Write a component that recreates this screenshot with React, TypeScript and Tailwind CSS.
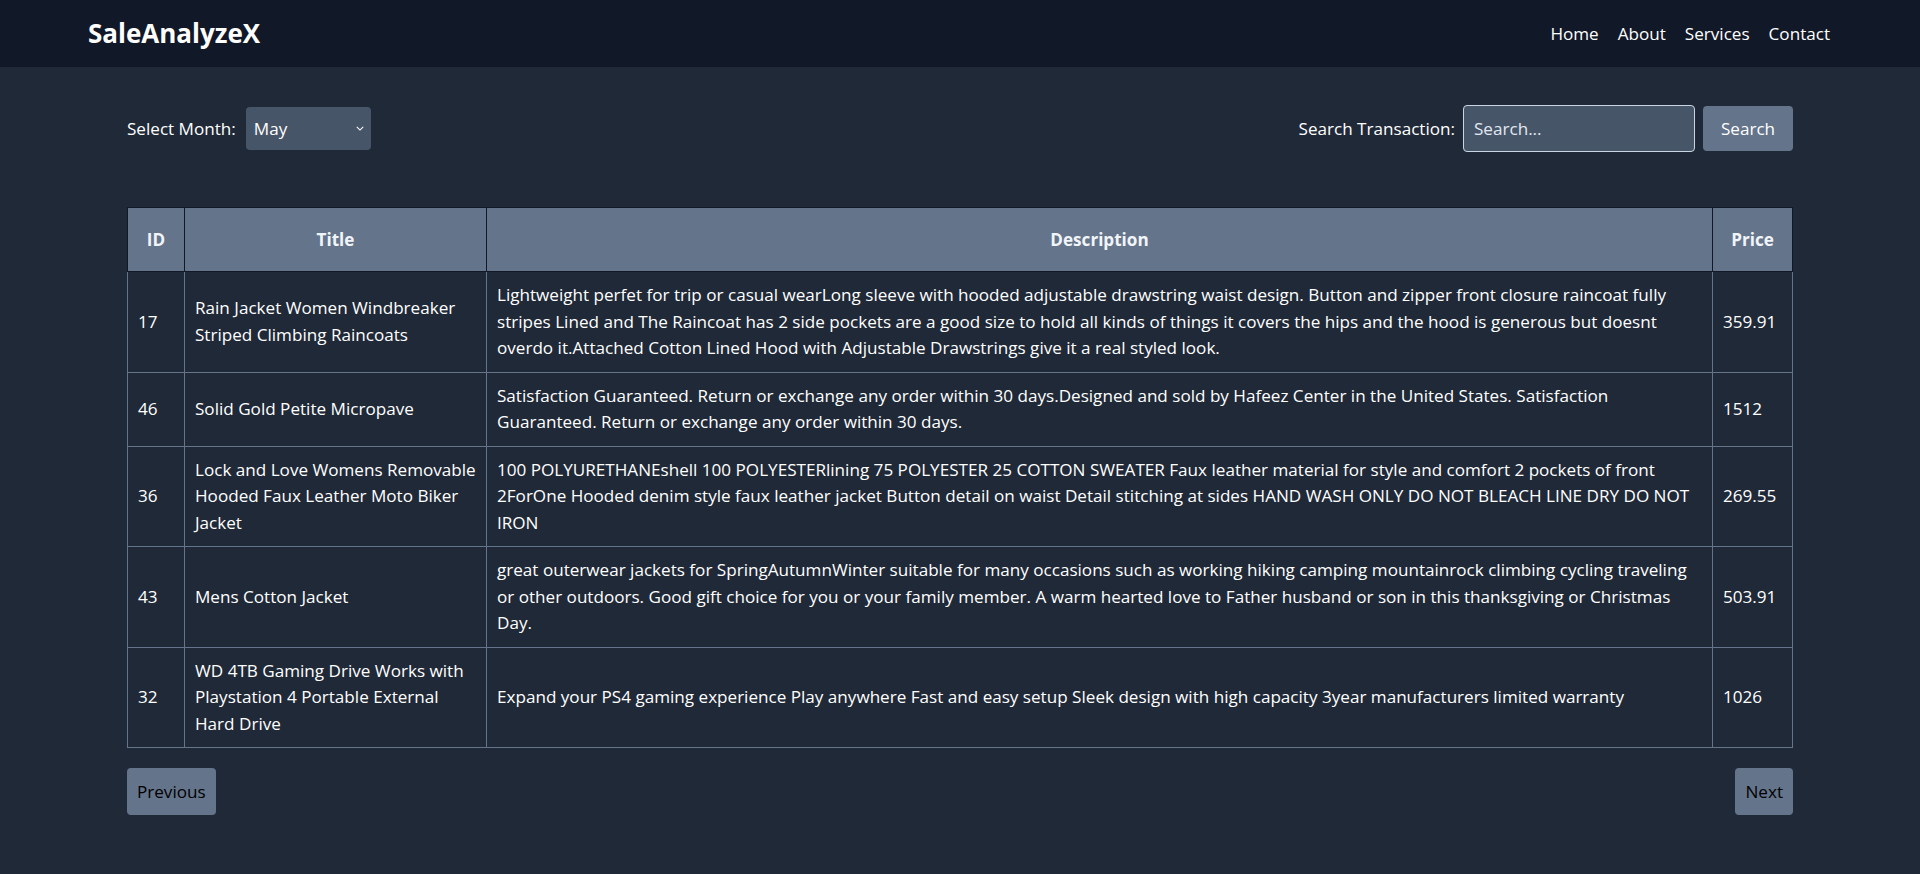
import { useState } from 'react';

// Transactions table page — navbar, month filter + search, paginated table.

type Transaction = {
  id: number;
  title: string;
  description: string;
  price: string;
};

const MONTHS = [
  'January', 'February', 'March', 'April', 'May', 'June',
  'July', 'August', 'September', 'October', 'November', 'December',
];

const ROWS: Transaction[] = [
  {
    id: 17,
    title: 'Rain Jacket Women Windbreaker Striped Climbing Raincoats',
    description:
      'Lightweight perfet for trip or casual wearLong sleeve with hooded adjustable drawstring waist design. Button and zipper front closure raincoat fully stripes Lined and The Raincoat has 2 side pockets are a good size to hold all kinds of things it covers the hips and the hood is generous but doesnt overdo it.Attached Cotton Lined Hood with Adjustable Drawstrings give it a real styled look.',
    price: '359.91',
  },
  {
    id: 46,
    title: 'Solid Gold Petite Micropave',
    description:
      'Satisfaction Guaranteed. Return or exchange any order within 30 days.Designed and sold by Hafeez Center in the United States. Satisfaction Guaranteed. Return or exchange any order within 30 days.',
    price: '1512',
  },
  {
    id: 36,
    title: 'Lock and Love Womens Removable Hooded Faux Leather Moto Biker Jacket',
    description:
      '100 POLYURETHANEshell 100 POLYESTERlining 75 POLYESTER 25 COTTON SWEATER Faux leather material for style and comfort 2 pockets of front 2ForOne Hooded denim style faux leather jacket Button detail on waist Detail stitching at sides HAND WASH ONLY DO NOT BLEACH LINE DRY DO NOT IRON',
    price: '269.55',
  },
  {
    id: 43,
    title: 'Mens Cotton Jacket',
    description:
      'great outerwear jackets for SpringAutumnWinter suitable for many occasions such as working hiking camping mountainrock climbing cycling traveling or other outdoors. Good gift choice for you or your family member. A warm hearted love to Father husband or son in this thanksgiving or Christmas Day.',
    price: '503.91',
  },
  {
    id: 32,
    title: 'WD 4TB Gaming Drive Works with Playstation 4 Portable External Hard Drive',
    description:
      'Expand your PS4 gaming experience Play anywhere Fast and easy setup Sleek design with high capacity 3year manufacturers limited warranty',
    price: '1026',
  },
];

const FONT = { fontFamily: '"Open Sans", "Noto Sans", sans-serif' };

function Navbar() {
  return (
    <nav className="flex h-[67px] items-center justify-between bg-[#111827] pl-[88px] pr-[90px]">
      <span className="text-[26px] font-bold text-white">SaleAnalyzeX</span>
      <ul className="flex items-center gap-[19px] text-[17.1px] text-white">
        <li>Home</li>
        <li>About</li>
        <li>Services</li>
        <li>Contact</li>
      </ul>
    </nav>
  );
}

function Filters() {
  const [month, setMonth] = useState('May');
  const [query, setQuery] = useState('');

  return (
    <div className="flex items-center justify-between">
      <label className="flex items-center gap-[10px] text-white">
        Select Month:
        <span className="relative">
          <select
            value={month}
            onChange={(e) => setMonth(e.target.value)}
            className="h-[43px] w-[125px] appearance-none rounded bg-[#475569] pl-2 text-white outline-none"
          >
            {MONTHS.map((m) => (
              <option key={m}>{m}</option>
            ))}
          </select>
          <svg
            viewBox="0 0 10 6"
            className="pointer-events-none absolute right-[7px] top-[19px] h-[5px] w-[8px]"
            fill="none"
            stroke="white"
            strokeWidth="1.3"
          >
            <path d="M1 1l4 4 4-4" />
          </svg>
        </span>
      </label>

      <div className="flex items-center gap-2 text-white">
        <span>Search Transaction:</span>
        <input
          value={query}
          onChange={(e) => setQuery(e.target.value)}
          placeholder="Search..."
          className="h-[47px] w-[232px] rounded border border-slate-300 bg-[#475569] px-2.5 text-white outline-none placeholder:text-slate-200"
        />
        <button type="button" className="h-[45px] w-[90px] rounded bg-[#64748b] text-white">
          Search
        </button>
      </div>
    </div>
  );
}

function TransactionsTable() {
  return (
    <table className="w-full table-fixed border-collapse text-left">
      <colgroup>
        <col className="w-[57px]" />
        <col className="w-[302px]" />
        <col />
        <col className="w-[80px]" />
      </colgroup>
      <thead>
        <tr className="h-[64px] bg-[#64748b] text-slate-100">
          {['ID', 'Title', 'Description', 'Price'].map((h) => (
            <th key={h} className="border border-[#111827] px-2.5 text-center font-bold">
              {h}
            </th>
          ))}
        </tr>
      </thead>
      <tbody className="text-white leading-[26.5px]">
        {ROWS.map((r) => (
          <tr key={r.id}>
            <td className="border border-[#64748b] px-2.5 py-2.5 align-middle">{r.id}</td>
            <td className="border border-[#64748b] px-2.5 py-2.5 align-middle">{r.title}</td>
            <td className="border border-[#64748b] px-2.5 py-2.5 align-middle">{r.description}</td>
            <td className="border border-[#64748b] px-2.5 py-2.5 align-middle">{r.price}</td>
          </tr>
        ))}
      </tbody>
    </table>
  );
}

export default function App() {
  return (
    <div className="min-h-screen bg-[#1f2937] text-[17.1px] leading-[27px]" style={FONT}>
      <Navbar />
      <main className="px-[127px] pt-[38px]">
        <Filters />
        <div className="mt-[55px]">
          <TransactionsTable />
        </div>
        <div className="mt-5 flex justify-between">
          <button type="button" className="h-[47px] rounded bg-[#64748b] px-2.5 text-black">
            Previous
          </button>
          <button type="button" className="h-[47px] rounded bg-[#64748b] px-2.5 text-black">
            Next
          </button>
        </div>
      </main>
    </div>
  );
}
